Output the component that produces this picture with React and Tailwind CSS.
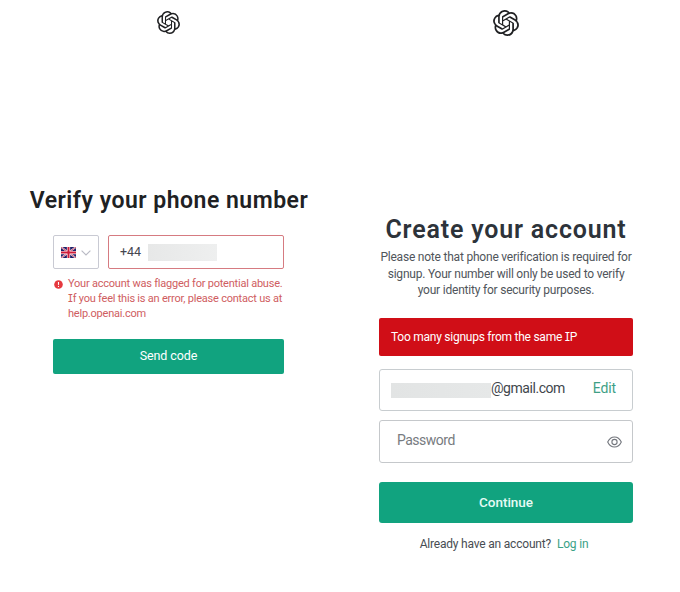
import React from "react";
import { SiOpenai } from "react-icons/si";

const SerifI = () => (
  <span className="font-['Inter',sans-serif] [font-feature-settings:'cv08']">
    I
  </span>
);

const FlagUK = () => (
  <svg width="15" height="11" viewBox="0 0 60 44" className="shrink-0">
    <rect width="60" height="44" rx="3" fill="#1f2068" />
    <path d="M0 0L60 44M60 0L0 44" stroke="#eee6f0" strokeWidth="7" />
    <path d="M0 0L60 44M60 0L0 44" stroke="#d22a45" strokeWidth="3" />
    <path d="M30 0V44M0 22H60" stroke="#fff" strokeWidth="13" />
    <path d="M30 0V44M0 22H60" stroke="#cf1c3a" strokeWidth="8" />
  </svg>
);

const ChevronDown = () => (
  <svg
    width="10"
    height="6"
    viewBox="0 0 10 6"
    fill="none"
    stroke="#b9bac4"
    strokeWidth="1.1"
    className="mt-px shrink-0"
  >
    <path d="M0.6 0.6L5 5L9.4 0.6" />
  </svg>
);

const ErrorIcon = () => (
  <svg width="9" height="9" viewBox="0 0 9 9" className="mt-[3px] shrink-0">
    <circle cx="4.5" cy="4.5" r="4.3" fill="#e5393f" />
    <path d="M4.5 2V4.9" stroke="#fff" strokeWidth="1.1" />
    <circle cx="4.5" cy="6.4" r="0.6" fill="#fff" />
  </svg>
);

const EyeIcon = () => (
  <svg
    width="15"
    height="12"
    viewBox="0 0 15 12"
    fill="none"
    stroke="#73767d"
    strokeWidth="1.1"
  >
    <path d="M0.7 6C2.2 2.8 4.6 1 7.5 1S12.8 2.8 14.3 6C12.8 9.2 10.4 11 7.5 11S2.2 9.2 0.7 6Z" />
    <circle cx="7.5" cy="6" r="2.6" />
  </svg>
);

const VerifyPhone = () => (
  <div className="w-[337px] flex flex-col items-center pt-[11px]">
    <SiOpenai className="size-[23px] text-[#202123]" />
    <h1 className="mt-[151px] pl-px text-[23px] leading-8 font-semibold tracking-[0.5px] whitespace-nowrap text-[#202123]">
      Verify your phone number
    </h1>
    <div className="mt-[18px] w-[231px]">
      <div className="flex gap-[9px]">
        <button className="w-[46px] h-[34px] flex items-center justify-center gap-[5px] rounded-[2px] border border-[#c9cad3]">
          <FlagUK />
          <ChevronDown />
        </button>
        <div className="flex-1 h-[34px] flex items-center rounded-[2px] border border-[#d67b81] pl-[11px] text-[12.5px] text-[#444650]">
          <span>+44</span>
          <span className="ml-[7px] mt-px h-[17px] w-[69px] bg-linear-to-r from-[#e7e8e8] to-[#eeefef]"></span>
        </div>
      </div>
      <div className="mt-2 flex gap-[5px] pl-px text-[11px] leading-[14.4px] tracking-[-0.22px] text-[#cf5d61]">
        <ErrorIcon />
        <p className="whitespace-nowrap">
          Your account was flagged for potential abuse.
          <br />
          <SerifI />f you feel this is an error, please contact us at
          <br />
          help.openai.com
        </p>
      </div>
      <button className="mt-[18px] w-full h-[35px] rounded-[2px] bg-[#11a37f] text-[12.5px] tracking-[-0.1px] text-white">
        Send code
      </button>
    </div>
  </div>
);

const CreateAccount = () => (
  <div className="w-[338px] flex flex-col items-center pt-[10px]">
    <SiOpenai className="size-[26px] text-[#202123]" />
    <h1 className="mt-[178px] text-[25px] leading-8 font-semibold tracking-[0.82px] whitespace-nowrap text-[#2d333a]">
      Create your account
    </h1>
    <p className="mt-[3px] text-center text-[12px] leading-[16.7px] tracking-[-0.21px] whitespace-nowrap text-[#50555b]">
      Please note that phone verification is required for
      <br />
      signup. Your number will only be used to verify
      <br />
      your identity for security purposes.
    </p>
    <div className="w-[254px]">
      <div className="mt-[19px] h-[38px] flex items-center rounded-[2px] bg-[#d00e17] px-3 pb-px text-[12px] tracking-[-0.25px] text-white">
        <span>
          Too many signups from the same <SerifI />P
        </span>
      </div>
      <div className="mt-[13px] h-[42px] flex items-center rounded-[3px] border border-[#c8cdd0] pl-[11px] pr-4 text-[14px] tracking-[-0.45px]">
        <span className="h-[15px] w-[100px] bg-linear-to-r from-[#e2e4e4] to-[#e6e8e8]"></span>
        <span className="pb-[3px] text-[#41464c]">@gmail.com</span>
        <a className="ml-auto pb-[3px] tracking-[-0.1px] text-[#3f9f86]">
          Edit
        </a>
      </div>
      <div className="mt-[9px] h-[43px] flex items-center justify-between rounded-[3px] border border-[#c5c8cb] pl-[17px] pr-[10px] text-[14px] tracking-[-0.5px] text-[#777b80]">
        <span className="pb-[3px]">Password</span>
        <EyeIcon />
      </div>
      <button className="mt-[19px] w-full h-[41px] rounded-[3px] bg-[#11a37f] text-[13.5px] font-medium text-[#e6fbf5]">
        Continue
      </button>
      <div className="mt-3 flex justify-center gap-[6px] pr-1 text-[12px] tracking-[-0.2px] text-[#484d53]">
        <span>Already have an account?</span>
        <a className="text-[#3ba286]">Log in</a>
      </div>
    </div>
  </div>
);

export default function App() {
  return (
    <div className="flex h-[592px] w-[680px] overflow-hidden bg-white font-['Roboto',sans-serif]">
      <VerifyPhone />
      <CreateAccount />
    </div>
  );
}
